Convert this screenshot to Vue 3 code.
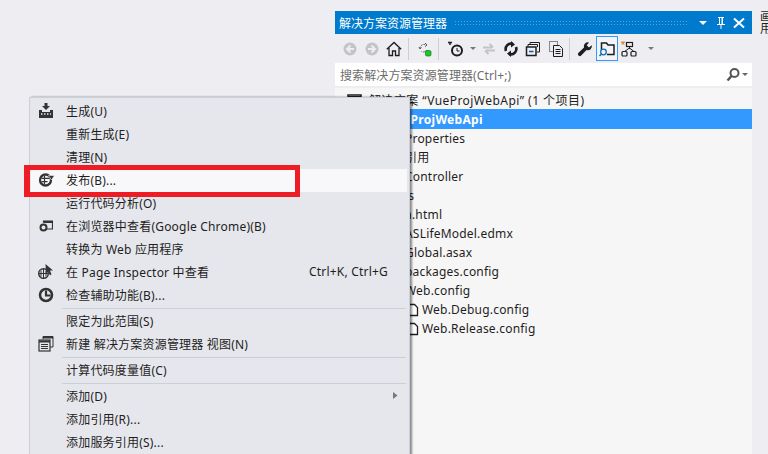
<script setup>
const treeRows = [
  { text: '解决方案 “VueProjWebApi” (1 个项目)', left: 369, icon: 'solution', wide: true },
  { text: 'VueProjWebApi', left: 387, selected: true },
  { text: 'Properties', left: 405 },
  { text: '引用', left: 405 },
  { text: 'Controller', left: 405 },
  { text: 'js', left: 405 },
  { text: 'a.html', left: 405 },
  { text: 'ASLifeModel.edmx', left: 405 },
  { text: 'Global.asax', left: 405 },
  { text: 'packages.config', left: 405 },
  { text: 'Web.config', left: 405 },
  { text: 'Web.Debug.config', left: 422, icon: 'file' },
  { text: 'Web.Release.config', left: 422, icon: 'file' },
]

const menuItems = [
  { label: '生成(U)', icon: 'build' },
  { label: '重新生成(E)' },
  { label: '清理(N)' },
  { label: '发布(B)...', icon: 'publish', active: true },
  { label: '运行代码分析(O)' },
  { label: '在浏览器中查看(Google Chrome)(B)', icon: 'browser' },
  { label: '转换为 Web 应用程序' },
  { label: '在 Page Inspector 中查看', icon: 'inspector', shortcut: 'Ctrl+K, Ctrl+G' },
  { label: '检查辅助功能(B)...', icon: 'access' },
  { sep: true },
  { label: '限定为此范围(S)' },
  { label: '新建 解决方案资源管理器 视图(N)', icon: 'newview' },
  { sep: true },
  { label: '计算代码度量值(C)' },
  { sep: true },
  { label: '添加(D)', submenu: true },
  { label: '添加引用(R)...' },
  { label: '添加服务引用(S)...' },
]
</script>

<template>
  <div class="page">
    <section class="panel">
      <header class="title">
        <span class="title-text">解决方案资源管理器</span>
        <span class="dots"></span>
        <svg class="title-icon" width="16" height="16" viewBox="0 0 16 16"><path d="M4 6h8l-4 4z" fill="#fff"/></svg>
        <svg class="title-icon" width="18" height="16" viewBox="0 0 18 16"><path d="M6 2h6v1h-1v6h2v1H9.500v4h-1v-4H5V9h2V3H6zM8 3v6h1.500V3z" fill="#fff"/></svg>
        <svg class="title-icon last" width="16" height="16" viewBox="1 0 16 16"><path d="M4 3.500l10 9M14 3.500l-10 9" stroke="#fff" stroke-width="2" fill="none"/></svg>
      </header>

      <div class="toolbar">
        <span class="tool"><svg width="16" height="16" viewBox="0 0 16 16"><circle cx="8" cy="8" r="6.500" fill="#c4c4c8"/><path d="M8.500 4.500L5 8l3.500 3.500M5.500 8H12" stroke="#eeeef2" stroke-width="2" fill="none"/></svg></span>
        <span class="tool"><svg width="16" height="16" viewBox="0 0 16 16"><circle cx="8" cy="8" r="6.500" fill="#c4c4c8"/><path d="M7.500 4.500L11 8l-3.500 3.500M10.500 8H4" stroke="#eeeef2" stroke-width="2" fill="none"/></svg></span>
        <span class="tool"><svg width="16" height="16" viewBox="0 0 16 16"><path d="M.8 8.200L8 1.500l7.200 6.700M3 7v7.500h3.500V10h3v4.500H13V7" stroke="#1e1e1e" stroke-width="1.300" fill="none"/></svg></span>
        <span class="tb-sep"></span>
        <span class="tool"><svg width="16" height="16" viewBox="0 0 16 16"><path d="M4 7a4 4 0 0 1 6-3M10.500 9a3.500 3.500 0 0 1-5 1.500" stroke="#555" stroke-dasharray="1.500 1" fill="none"/><path d="M9 2l2 2-2 1.500M3 6l1 2 1.500-1.500" stroke="#555" fill="none"/><rect x="9.500" y="9.500" width="5.500" height="5.500" rx="1.500" fill="#10d020" stroke="#1a6e1a" stroke-width=".7"/></svg></span>
        <span class="tb-sep"></span>
        <span class="tool hist"><svg width="18" height="16" viewBox="0 0 18 16"><circle cx="10" cy="9.500" r="5" fill="none" stroke="#1e1e1e" stroke-width="2"/><path d="M10 7v3h2.500" stroke="#1e1e1e" fill="none"/><path d="M1 1.500h4M3 1.500V4" stroke="#1e1e1e" stroke-width="1.500" fill="none"/></svg></span>
        <span class="caret-tool"><svg width="8" height="5" viewBox="0 0 8 5"><path d="M1 1h6L4 4z" fill="#77777c"/></svg></span>
        <span class="tool"><svg width="16" height="16" viewBox="0 0 16 16"><path d="M2 6.500h9M8.500 3l3.500 3.500M14 9.500H5M7.500 13L4 9.500" stroke="#c4c4c8" stroke-width="2" fill="none"/></svg></span>
        <span class="tool"><svg width="16" height="16" viewBox="0 0 16 16"><path d="M3 10A5.500 5.500 0 0 1 9.500 2.800M13 6a5.500 5.500 0 0 1-6.500 7.200" stroke="#1e1e1e" stroke-width="2.600" fill="none"/><path d="M8 0l4 3.500L8 6.500zM8 16l-4-3.500L8 9.500z" fill="#1e1e1e"/></svg></span>
        <span class="tool"><svg width="16" height="16" viewBox="0 0 16 16"><path d="M5 4V1.500h9.500V11H12M3 6V3.500h9.500V6" stroke="#1e1e1e" fill="none"/><rect x="1.500" y="6" width="9.500" height="8.500" fill="none" stroke="#1e1e1e" stroke-width="1.500"/><path d="M4 10.500h4.500" stroke="#0b5cad" stroke-width="1.500"/></svg></span>
        <span class="tool doc"><svg width="16" height="16" viewBox="0 0 16 16"><rect x="1.500" y=".5" width="8" height="10" fill="none" stroke="#1e1e1e" stroke-dasharray="1 1"/><path d="M5.500 4.500h6l3 3v8h-9z" fill="#eeeef2" stroke="#1e1e1e"/><path d="M7.500 8.500h5M7.500 10.500h5M7.500 12.500h5" stroke="#1e1e1e"/></svg></span>
        <span class="tb-sep wide"></span>
        <span class="tool"><svg width="16" height="16" viewBox="0 0 16 16"><path d="M14.800 4.200l-2.800 2.300-2.300-2.300L12 1.500a4 4 0 0 0-5 5L1.500 11.800a1.900 1.900 0 0 0 2.700 2.700L9.500 9a4 4 0 0 0 5.300-4.800z" fill="#1e1e1e"/></svg></span>
        <span class="tool on"><svg width="18" height="16" viewBox="0 0 18 16"><path d="M3.500 9V2h5l1.500 2h6v9.500H9" stroke="#1e1e1e" stroke-width="1.500" fill="none"/><circle cx="5.500" cy="11" r="2.800" fill="none" stroke="#0b6fc2" stroke-width="1.300"/><path d="M3.500 13l-2 2" stroke="#0b6fc2" stroke-width="1.600"/></svg></span>
        <span class="tool"><svg width="18" height="16" viewBox="0 0 18 16"><path d="M1 1.500h4M3 0v4M1.500 3.500l3-3M1.500.5l3 3" stroke="#d98a32" stroke-width=".9"/><rect x="6.500" y="1.500" width="6" height="4" fill="none" stroke="#1e1e1e" stroke-width="1.200"/><rect x="2" y="10.500" width="5" height="4.500" rx="1" fill="none" stroke="#1e1e1e" stroke-width="1.200"/><rect x="11" y="10.500" width="5" height="4.500" rx="1" fill="none" stroke="#1e1e1e" stroke-width="1.200"/><path d="M9.500 5.500V8M4.500 10.500L9.500 7l4.500 3.500" stroke="#1e1e1e" fill="none"/></svg></span>
        <span class="caret-tool end"><svg width="8" height="5" viewBox="0 0 8 5"><path d="M1 1h6L4 4z" fill="#77777c"/></svg></span>
      </div>

      <div class="search">
        <span class="search-text">搜索解决方案资源管理器(Ctrl+;)</span>
        <svg width="16" height="16" viewBox="0 0 16 16"><circle cx="9.500" cy="6" r="4" fill="none" stroke="#555" stroke-width="2"/><path d="M6.500 9L2.500 13.500" stroke="#555" stroke-width="2.500"/></svg>
        <svg class="search-caret" width="8" height="5" viewBox="0 0 8 5"><path d="M1 1h6L4 4z" fill="#666"/></svg>
      </div>

      <ul class="tree">
        <li v-for="row in treeRows" :key="row.text" class="tree-row" :class="{ selected: row.selected, wide: row.wide }">
          <span class="tree-label" :style="{ marginLeft: row.left - 335 + 'px' }">
            <svg v-if="row.icon === 'solution'" class="tree-icon sol" width="16" height="14" viewBox="0 0 16 14"><rect x="1" y="1" width="13" height="11" fill="none" stroke="#1e1e1e" stroke-width="1.500"/><path d="M1 3h13" stroke="#1e1e1e" stroke-width="2"/></svg>
            <svg v-if="row.icon === 'file'" class="tree-icon" width="12" height="14" viewBox="0 0 12 14"><path d="M1.500 1.500h6l3 3v8h-9z" fill="#fff" stroke="#1e1e1e" stroke-width="1.300"/></svg>
            {{ row.text }}
          </span>
        </li>
      </ul>
    </section>

    <aside class="clipped">画<br>用</aside>

    <nav class="menu">
      <template v-for="(item, i) in menuItems" :key="i">
        <div v-if="item.sep" class="menu-sep"></div>
        <div v-else class="menu-item" :class="{ active: item.active }">
          <span class="menu-icon">
            <svg v-if="item.icon === 'build'" width="16" height="16" viewBox="0 0 16 16"><path d="M6.500 0h3v3H12L8 7 4 3h2.500z" fill="#333"/><path d="M1 7h3v2h8V7h3v8H1z" fill="#333"/><path d="M3 11h1.500M6 11h1.500M9 11h1.500M12 11h1" stroke="#e6e7ec" stroke-width="1.500"/></svg>
            <svg v-if="item.icon === 'publish'" width="17" height="16" viewBox="0 0 17 16"><circle cx="7.500" cy="8" r="5.500" fill="none" stroke="#333" stroke-width="2.300"/><path d="M3.500 6.300h8M3.500 9.700h6M6.500 4v8" stroke="#333" stroke-width="1.200"/><path d="M10.500 3.500h6L13.500 8z" fill="#333" stroke="#f8f8fb" stroke-width=".6"/></svg>
            <svg v-if="item.icon === 'browser'" width="14" height="12" viewBox="0 0 14 12"><path d="M4.500 2.500V1h9v8H8" fill="none" stroke="#333" stroke-width="1.200"/><path d="M4.500 2h9" stroke="#333" stroke-width="2"/><circle cx="4.500" cy="7.500" r="3" fill="none" stroke="#333" stroke-width="2"/></svg>
            <svg v-if="item.icon === 'inspector'" width="16" height="15" viewBox="0 0 16 15"><circle cx="5.500" cy="9.500" r="4.800" fill="none" stroke="#333" stroke-width="1.400"/><path d="M5.500 4.700v9.600M1 9.500h9M3 6.500v6M8 6.500v6" stroke="#333"/><path d="M7.500 0l7.500 6.500h-3l1.500 4-1.700.7-1.600-4-2.200 2.300z" fill="#333"/></svg>
            <svg v-if="item.icon === 'access'" width="16" height="16" viewBox="0 0 16 16"><circle cx="8" cy="8" r="6" fill="none" stroke="#333" stroke-width="2.500"/><path d="M8 3.500V8.500h4.500" stroke="#333" stroke-width="2.200" fill="none"/></svg>
            <svg v-if="item.icon === 'newview'" width="16" height="16" viewBox="0 0 16 16"><path d="M5 3V.5h10V11h-3" fill="none" stroke="#333"/><path d="M5 1.500h10" stroke="#333" stroke-width="2"/><rect x="1" y="4" width="11" height="11" fill="none" stroke="#333" stroke-width="1.200"/><path d="M1 5.500h11" stroke="#333" stroke-width="2"/><path d="M3 8.500h7M3 10.500h7M3 12.500h7" stroke="#333"/></svg>
          </span>
          <span class="menu-label">{{ item.label }}</span>
          <span v-if="item.shortcut" class="menu-shortcut">{{ item.shortcut }}</span>
          <svg v-if="item.submenu" class="submenu" width="5" height="7" viewBox="0 0 5 7"><path d="M0 0l4.500 3.500L0 7z" fill="#77777c"/></svg>
        </div>
      </template>
    </nav>

    <div class="highlight"></div>
  </div>
</template>

<style scoped>
.page {
  position: relative;
  width: 768px;
  height: 454px;
  overflow: hidden;
  background: #eeeef2;
  font-family: "Noto Sans", "Noto Sans CJK SC", sans-serif;
  font-size: 12px;
  letter-spacing: 0.2px;
  color: #1e1e1e;
}
.panel {
  width: 417px;
  margin-left: 335px;
  padding-top: 11px;
}
.title {
  height: 23px;
  background: #007acc;
  color: #fff;
  display: flex;
  align-items: center;
  padding-left: 4px;
  letter-spacing: 0;
}
.dots {
  flex: 1;
  height: 5px;
  margin: 0 5px 0 7px;
  background-image: radial-gradient(circle, #59a5dd 0.6px, transparent 0.7px);
  background-size: 3px 3px;
}
.title-icon { margin-left: 1px; flex: none; }
.title-icon.last { margin-right: 5px; }
.toolbar {
  height: 29px;
  display: flex;
  align-items: center;
  padding-left: 4px;
}
.tool {
  width: 22px;
  height: 24px;
  display: flex;
  align-items: center;
  justify-content: center;
  flex: none;
  box-sizing: border-box;
}
.tool.hist { margin-left: 2px; }
.tool.doc { margin-left: 1px; }
.tool.on {
  height: 25px;
  border: 1px solid #3399ff;
  background: #f4f4f8;
}
.tb-sep {
  width: 1px;
  height: 22px;
  margin: 0 4px 0 3px;
  background: #ccced4;
  flex: none;
}
.tb-sep.wide { margin: 0 4px 0 2px; }
.caret-tool {
  width: 11px;
  display: flex;
  justify-content: center;
  flex: none;
}
.caret-tool.end { margin-left: 5px; }
.search {
  height: 23px;
  background: #fff;
  display: flex;
  align-items: center;
  padding: 0 3px 0 5px;
  color: #6d6d6d;
  letter-spacing: 0.1px;
}
.search-text { flex: 1; }
.tree {
  list-style: none;
  margin: 2px 0 0;
  padding: 2px 0 0;
  background: #f6f6f6;
  height: 365px;
}
.tree-row {
  height: 19px;
  line-height: 21px;
  white-space: nowrap;
}
.tree-row.wide { letter-spacing: 0.45px; }
.tree-row.selected {
  background: #3399ff;
  box-shadow: 0 1px 0 #3399ff;
  color: #fff;
  font-weight: 700;
  letter-spacing: 0.3px;
}
.tree-label { position: relative; display: inline-block; }
.tree-icon {
  position: absolute;
  left: -15px;
  top: 4px;
}
.tree-icon.sol { left: -22px; }
.clipped {
  position: absolute;
  left: 760px;
  top: 11px;
  font-size: 12px;
  line-height: 12px;
  letter-spacing: 0;
}
.menu {
  position: absolute;
  left: 29px;
  top: 97px;
  width: 376px;
  height: 370px;
  padding: 2px 2px 0 1px;
  background: #e6e7ec;
  border: 1px solid #ccced8;
  box-shadow: 2px 0 2px rgba(0, 0, 0, 0.45);
}
.menu-item {
  height: 23px;
  box-sizing: border-box;
  padding-bottom: 2px;
  display: flex;
  align-items: center;
  white-space: nowrap;
}
.menu-item.active { background: #f8f8fb; }
.menu-icon {
  width: 35px;
  flex: none;
  display: flex;
  justify-content: center;
  padding-right: 5px;
  box-sizing: border-box;
}
.menu-label { flex: 1; }
.menu-shortcut { margin-right: 19px; }
.submenu { margin-right: 9px; }
.menu-sep {
  height: 1px;
  margin: 1px 1px 1px 31px;
  background: #ccced8;
}
.highlight {
  position: absolute;
  left: 24px;
  top: 165px;
  width: 265px;
  height: 22px;
  border-style: solid;
  border-color: #ee1c25;
  border-width: 5px 5px 5px 6px;
}
</style>

<style>
html, body { margin: 0; background: #eeeef2; }
</style>
